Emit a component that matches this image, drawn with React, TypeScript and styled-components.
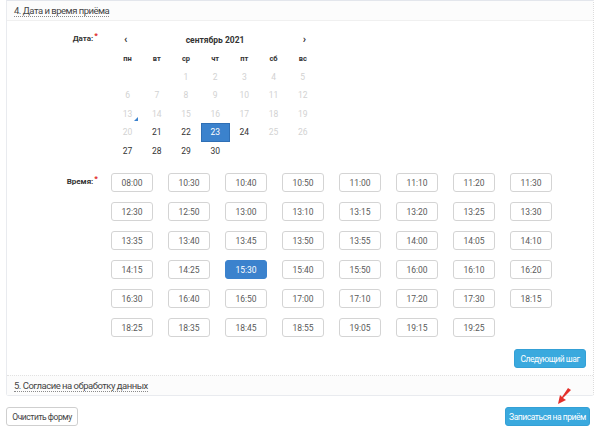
import React from "react";
import styled, { createGlobalStyle, css } from "styled-components";

const GlobalStyle = createGlobalStyle`
  html, body {
    margin: 0;
    padding: 0;
    background: #ffffff;
  }
  body {
    font-family: Roboto, "Noto Sans", sans-serif;
    color: #333;
  }
`;

const Page = styled.div`
  position: relative;
  width: 600px;
  height: 432px;
  padding: 0 6px;
  box-sizing: border-box;
`;

const Panel = styled.section`
  border: 1px solid #e9ebef;
  border-top-color: #e3e6ec;
  border-right: 1px dotted #dcdcdc;
  border-radius: 0 0 3px 3px;
  background: #fff;
`;

const SectionHeader = styled.div<{ $top?: boolean }>`
  display: flex;
  align-items: center;
  height: 19px;
  padding: 0 7px;
  background: #fcfcfc;
  ${({ $top }) =>
    $top
      ? css`
          border-bottom: 1px solid #f0f0f0;
        `
      : css`
          border-top: 1px dotted #e2e2e2;
        `}
`;

const SectionTitle = styled.span`
  font-size: 9.5px;
  letter-spacing: -0.5px;
  color: #444;
  line-height: 11px;
  border-bottom: 1px dotted #8a8a8a;
`;

const Body = styled.div`
  padding: 9px 0 7px;
`;

const FormRow = styled.div<{ $gapTop?: number }>`
  display: grid;
  grid-template-columns: 91px 1fr;
  column-gap: 13px;
  margin-top: ${({ $gapTop }) => $gapTop ?? 0}px;
`;

const Label = styled.div<{ $offset?: number }>`
  text-align: right;
  font-size: 8px;
  font-weight: 700;
  color: #333;
  padding-top: ${({ $offset }) => $offset ?? 0}px;

  &::after {
    content: "*";
    color: #e02020;
    font-size: 8px;
    margin-left: 1px;
    vertical-align: 3px;
  }
`;

const Calendar = styled.div`
  width: 204px;
  margin-left: 2px;
`;

const MonthBar = styled.div`
  display: flex;
  align-items: center;
  justify-content: space-between;
  height: 19px;
  padding: 0 11px;
  font-size: 8.5px;
  font-weight: 700;
  color: #333;
`;

const NavArrow = styled.span`
  font-size: 11px;
  font-weight: 700;
  color: #333;
`;

const DaysGrid = styled.div`
  display: grid;
  grid-template-columns: repeat(7, 29.2px);
  grid-auto-rows: 18.5px;
`;

const DayName = styled.div`
  display: flex;
  align-items: center;
  justify-content: center;
  font-size: 7.5px;
  font-weight: 700;
  color: #333;
`;

const DayCell = styled.div<{ $disabled?: boolean; $selected?: boolean; $today?: boolean }>`
  position: relative;
  display: flex;
  align-items: center;
  justify-content: center;
  font-size: 8.5px;
  color: ${({ $disabled }) => ($disabled ? "#d2d2d2" : "#333")};
  ${({ $selected }) =>
    $selected &&
    css`
      background: #3b82cd;
      border: 1px solid #2f6fb5;
      color: #fff;
      box-sizing: border-box;
    `}
  ${({ $today }) =>
    $today &&
    css`
      &::after {
        content: "";
        position: absolute;
        right: 4px;
        bottom: 2px;
        border-left: 4px solid transparent;
        border-bottom: 4px solid #3b82cd;
      }
    `}
`;

const TimesGrid = styled.div`
  display: grid;
  grid-template-columns: repeat(8, 42px);
  grid-auto-rows: 19px;
  column-gap: 15px;
  row-gap: 10px;
`;

const TimeSlot = styled.button<{ $selected?: boolean }>`
  display: flex;
  align-items: center;
  justify-content: center;
  padding: 0;
  font-family: inherit;
  font-size: 8.5px;
  color: ${({ $selected }) => ($selected ? "#fff" : "#5a5a5a")};
  background: ${({ $selected }) => ($selected ? "#3b82cd" : "#fff")};
  border: 1px solid ${({ $selected }) => ($selected ? "#3b82cd" : "#d4d4d4")};
  border-radius: 3px;
`;

const NextRow = styled.div`
  display: flex;
  justify-content: flex-end;
  padding-right: 7px;
  margin-top: 12px;
`;

const Button = styled.button<{ $primary?: boolean; $width: number }>`
  height: 19px;
  width: ${({ $width }) => $width}px;
  padding: 0;
  font-family: inherit;
  font-size: 8.5px;
  letter-spacing: -0.45px;
  border-radius: 3px;
  cursor: pointer;
  ${({ $primary }) =>
    $primary
      ? css`
          color: #fff;
          background: #3aa9de;
          border: 1px solid #34a0d6;
        `
      : css`
          color: #444;
          background: #fff;
          border: 1px solid #cfcfcf;
        `}
`;

const Actions = styled.div`
  display: flex;
  justify-content: space-between;
  align-items: center;
  margin-top: 11px;
  padding-right: 4px;
`;

const Pointer = styled.svg`
  position: absolute;
  left: 551px;
  top: 387px;
`;

const weeks: (number | null)[][] = [
  [null, null, 1, 2, 3, 4, 5],
  [6, 7, 8, 9, 10, 11, 12],
  [13, 14, 15, 16, 17, 18, 19],
  [20, 21, 22, 23, 24, 25, 26],
  [27, 28, 29, 30, null, null, null],
];

const available = [21, 22, 23, 24, 27, 28, 29, 30];

const times = [
  "08:00", "10:30", "10:40", "10:50", "11:00", "11:10", "11:20", "11:30",
  "12:30", "12:50", "13:00", "13:10", "13:15", "13:20", "13:25", "13:30",
  "13:35", "13:40", "13:45", "13:50", "13:55", "14:00", "14:05", "14:10",
  "14:15", "14:25", "15:30", "15:40", "15:50", "16:00", "16:10", "16:20",
  "16:30", "16:40", "16:50", "17:00", "17:10", "17:20", "17:30", "18:15",
  "18:25", "18:35", "18:45", "18:55", "19:05", "19:15", "19:25",
];

const dayNames = ["пн", "вт", "ср", "чт", "пт", "сб", "вс"];

const App: React.FC = () => {
  return (
    <Page>
      <GlobalStyle />
      <Panel>
        <SectionHeader $top>
          <SectionTitle>4. Дата и время приёма</SectionTitle>
        </SectionHeader>
        <Body>
          <FormRow>
            <Label $offset={1}>Дата:</Label>
            <Calendar>
              <MonthBar>
                <NavArrow>‹</NavArrow>
                <span>сентябрь 2021</span>
                <NavArrow>›</NavArrow>
              </MonthBar>
              <DaysGrid>
                {dayNames.map((d) => (
                  <DayName key={d}>{d}</DayName>
                ))}
                {weeks.flat().map((day, i) => (
                  <DayCell
                    key={i}
                    $disabled={day !== null && !available.includes(day)}
                    $selected={day === 23}
                    $today={day === 13}
                  >
                    {day ?? ""}
                  </DayCell>
                ))}
              </DaysGrid>
            </Calendar>
          </FormRow>
          <FormRow $gapTop={13}>
            <Label $offset={1}>Время:</Label>
            <TimesGrid>
              {times.map((t) => (
                <TimeSlot key={t} $selected={t === "15:30"}>
                  {t}
                </TimeSlot>
              ))}
            </TimesGrid>
          </FormRow>
          <NextRow>
            <Button $primary $width={72}>
              Следующий шаг
            </Button>
          </NextRow>
        </Body>
        <SectionHeader>
          <SectionTitle>5. Согласие на обработку данных</SectionTitle>
        </SectionHeader>
      </Panel>
      <Actions>
        <Button $width={72}>Очистить форму</Button>
        <Button $primary $width={85}>
          Записаться на приём
        </Button>
      </Actions>
      <Pointer width="22" height="20" viewBox="0 0 22 20">
        <path
          d="M17 1 L20 3 L12 11 L15 13 L7 17 L9 8 L11 10 Z"
          fill="#e4302b"
        />
      </Pointer>
    </Page>
  );
};

export default App;
